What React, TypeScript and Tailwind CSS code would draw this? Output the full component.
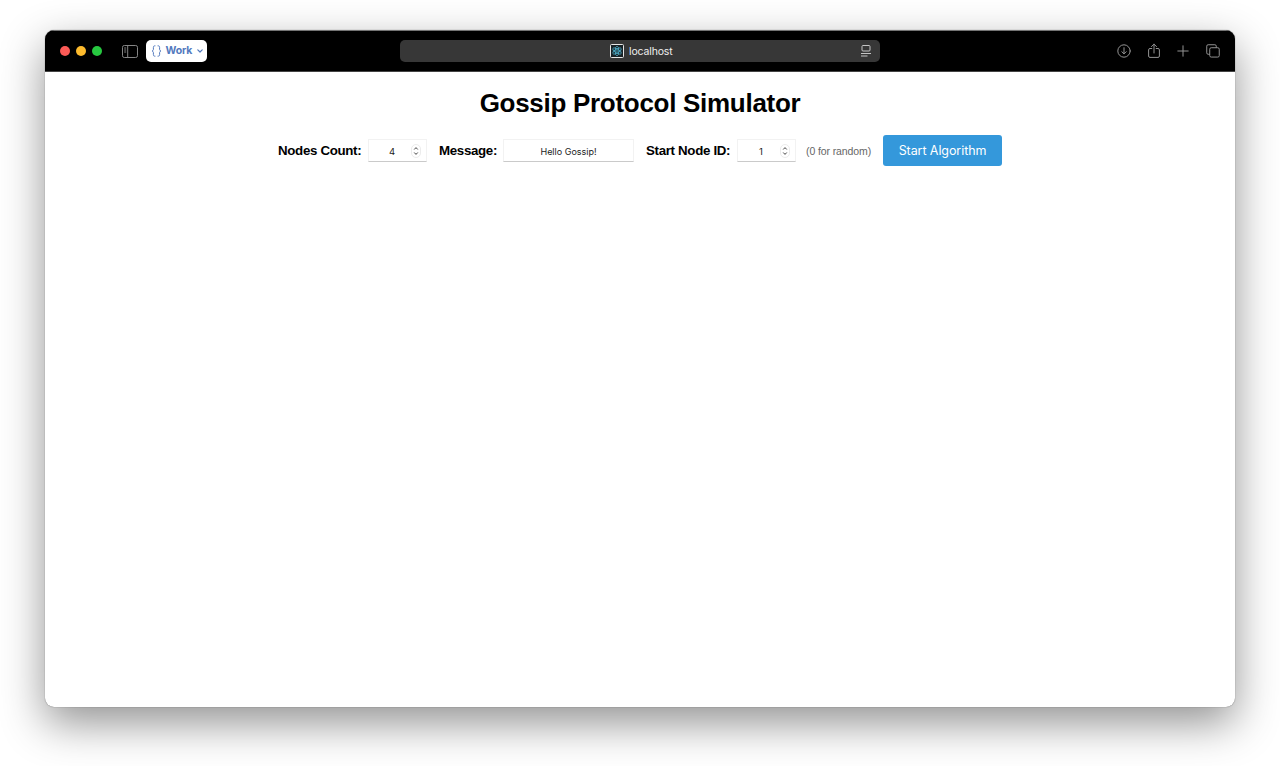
import type { ReactNode } from "react";

function Stepper() {
  return (
    <span className="flex h-3.5 w-2.5 items-center justify-center rounded-[5px] border border-[#ececec] bg-white">
      <svg width="8" height="12" viewBox="0 0 8 12" fill="none" stroke="#444" strokeWidth="1" strokeLinecap="round" strokeLinejoin="round" className="shrink-0">
        <path d="m2.500 4.200 1.500-1.600 1.500 1.600M2.500 7.800l1.500 1.600 1.500-1.600" />
      </svg>
    </span>
  );
}

function Field({ label, width, children }: { label: string; width: string; children: ReactNode }) {
  return (
    <div className="flex items-center">
      <span className={`${width} shrink-0 whitespace-nowrap text-[13.3px] leading-4 font-bold tracking-[-0.32px] text-black`}>{label}</span>
      {children}
    </div>
  );
}

function NumberInput({ value }: { value: string }) {
  return (
    <div className="flex h-[23px] w-[59px] items-center border border-[#f2f2f2] border-b-[#cacaca] bg-white pr-[5px]">
      <span className="w-[46px] pt-0.5 pl-1 text-center font-['Inter',sans-serif] text-[9.5px] leading-3 text-[#222]">{value}</span>
      <Stepper />
    </div>
  );
}

function BrowserBar() {
  return (
    <header className="flex h-[41px] shrink-0 items-center border-t border-[#747474] bg-black font-['Inter',sans-serif]">
      <div className="flex w-[355px] items-center pl-[15px]">
        <div className="flex gap-1.5">
          <span className="size-2.5 rounded-full bg-[#fc5b57]" />
          <span className="size-2.5 rounded-full bg-[#fdbb2d]" />
          <span className="size-2.5 rounded-full bg-[#27c840]" />
        </div>
        <svg width="16" height="13" viewBox="0 0 16 13" fill="none" stroke="#858585" strokeWidth="1" className="ml-5">
          <rect x=".5" y=".5" width="15" height="12" rx="1.8" />
          <path d="M5.7.5v12M2.2 3h2M2.2 5h2M2.2 7h2" />
        </svg>
        <div className="ml-2 flex h-[22px] w-[61px] items-center rounded-[5px] bg-white pl-[5px] text-[#5279bd]">
          <svg width="11" height="12" viewBox="0 0 11 12" fill="none" stroke="currentColor" strokeWidth="1" strokeLinecap="round" strokeLinejoin="round">
            <path d="M4 .8C2.7.8 2.4 1.3 2.4 2.4v1.8C2.4 5.2 2 5.7 1 6c1 .3 1.4.8 1.4 1.8v1.8c0 1.1.3 1.6 1.6 1.6M7 .8c1.3 0 1.6.5 1.6 1.6v1.8c0 1 .4 1.5 1.4 1.8-1 .3-1.4.8-1.4 1.8v1.8c0 1.1-.3 1.6-1.6 1.6" />
          </svg>
          <span className="ml-[3.5px] w-[27px] text-[10.5px] leading-4 font-bold tracking-[-0.15px]">Work</span>
          <svg width="6" height="4" viewBox="0 0 6 4" fill="none" stroke="currentColor" strokeWidth="1.2" strokeLinecap="round" strokeLinejoin="round" className="ml-1">
            <path d="m.8.8 2.2 2.2L5.2.8" />
          </svg>
        </div>
      </div>
      <div className="flex h-[22px] w-[480px] items-center rounded-[5px] bg-[#373737]">
        <div className="flex flex-1 items-center pl-[210px]">
          <svg width="14" height="14" viewBox="0 0 14 14" fill="none">
            <rect x=".5" y=".5" width="13" height="13" rx="1" fill="#182125" stroke="#e5e5e5" />
            <g stroke="#4cadc9" strokeWidth=".8">
              <ellipse cx="7" cy="7" rx="4.8" ry="1.9" transform="rotate(30 7 7)" />
              <ellipse cx="7" cy="7" rx="4.8" ry="1.9" transform="rotate(90 7 7)" />
              <ellipse cx="7" cy="7" rx="4.8" ry="1.9" transform="rotate(150 7 7)" />
            </g>
            <circle cx="7" cy="7" r=".8" fill="#4cadc9" />
          </svg>
          <span className="ml-[5px] pt-px text-[10.5px] leading-4 tracking-[-0.15px] text-[#eee]">localhost</span>
        </div>
        <svg width="10" height="12" viewBox="0 0 10 12" fill="none" stroke="#c4c4c4" strokeWidth="1" className="mr-[9px]">
          <rect x="1" y=".5" width="8" height="5.500" rx="1" />
          <path d="M0 8.500h10M0 11h6.500" />
        </svg>
      </div>
      <div className="flex flex-1 items-center justify-end pr-[15px] text-[#939393]">
        <svg width="14" height="14" viewBox="0 0 14 14" fill="none" stroke="currentColor" strokeWidth="1" strokeLinecap="round" strokeLinejoin="round">
          <circle cx="7" cy="7" r="6.2" />
          <path d="M7 3.7v6M4.8 7.7 7 9.900l2.200-2.200" />
        </svg>
        <svg width="12" height="16" viewBox="0 0 12 16" fill="none" stroke="currentColor" strokeWidth="1" strokeLinecap="round" strokeLinejoin="round" className="ml-[17px]">
          <path d="M3.8 5.5H2A1.4 1.4 0 0 0 .6 6.9V13A1.4 1.4 0 0 0 2 14.4h8a1.4 1.4 0 0 0 1.4-1.4V6.9A1.4 1.4 0 0 0 10 5.5H8.2M6 10V1.2M3.5 3.6 6 1.1l2.5 2.5" />
        </svg>
        <svg width="12" height="12" viewBox="0 0 12 12" fill="none" stroke="currentColor" strokeWidth="1" strokeLinecap="round" className="ml-[17px]">
          <path d="M6 .8v10.4M.8 6h10.4" />
        </svg>
        <svg width="14" height="14" viewBox="0 0 15 15" fill="none" stroke="currentColor" strokeWidth="1.050" strokeLinejoin="round" className="ml-[17px]">
          <rect x="4" y="4" width="10.2" height="10" rx="1.6" />
          <path d="M4 11H2.3A1.5 1.5 0 0 1 .8 9.500V2.300A1.500 1.500 0 0 1 2.300.8h7.200A1.500 1.500 0 0 1 11 2.300V4" />
        </svg>
      </div>
    </header>
  );
}

export default function App() {
  return (
    <div className="h-[766px] overflow-hidden bg-white px-[45px] pt-[30px] font-['Liberation_Sans',sans-serif]">
      <div className="flex h-[677px] flex-col overflow-hidden rounded-[9px] bg-white shadow-[0_0_1px_rgba(0,0,0,0.65),0_16px_44px_rgba(0,0,0,0.43)]">
        <BrowserBar />
        <main className="flex flex-1 flex-col items-center border-t border-[#444]">
          <h1 className="mt-[15px] text-[26px] leading-8 font-bold tracking-[-0.29px] whitespace-nowrap text-black">Gossip Protocol Simulator</h1>
          <div className="mt-4 flex h-[31px] w-[724px] items-center">
            <Field label="Nodes Count:" width="w-[90px]">
              <NumberInput value="4" />
            </Field>
            <div className="ml-3">
              <Field label="Message:" width="w-16">
                <div className="flex h-[23px] w-[131px] items-center justify-center border border-[#f2f2f2] border-b-[#cacaca] pt-0.5 font-['Inter',sans-serif] text-[9px] leading-3 text-[#222]">
                  Hello Gossip!
                </div>
              </Field>
            </div>
            <div className="ml-3">
              <Field label="Start Node ID:" width="w-[91px]">
                <NumberInput value="1" />
              </Field>
            </div>
            <span className="ml-2.5 w-[65px] text-[10.5px] leading-4 tracking-[-0.1px] whitespace-nowrap text-[#666]">(0 for random)</span>
            <button className="ml-3 h-[31px] w-[119px] rounded-[3px] bg-[#3498db] pt-px font-['Inter',sans-serif] text-[12.5px] leading-4 tracking-[-0.08px] whitespace-nowrap text-white">
              Start Algorithm
            </button>
          </div>
        </main>
      </div>
    </div>
  );
}
